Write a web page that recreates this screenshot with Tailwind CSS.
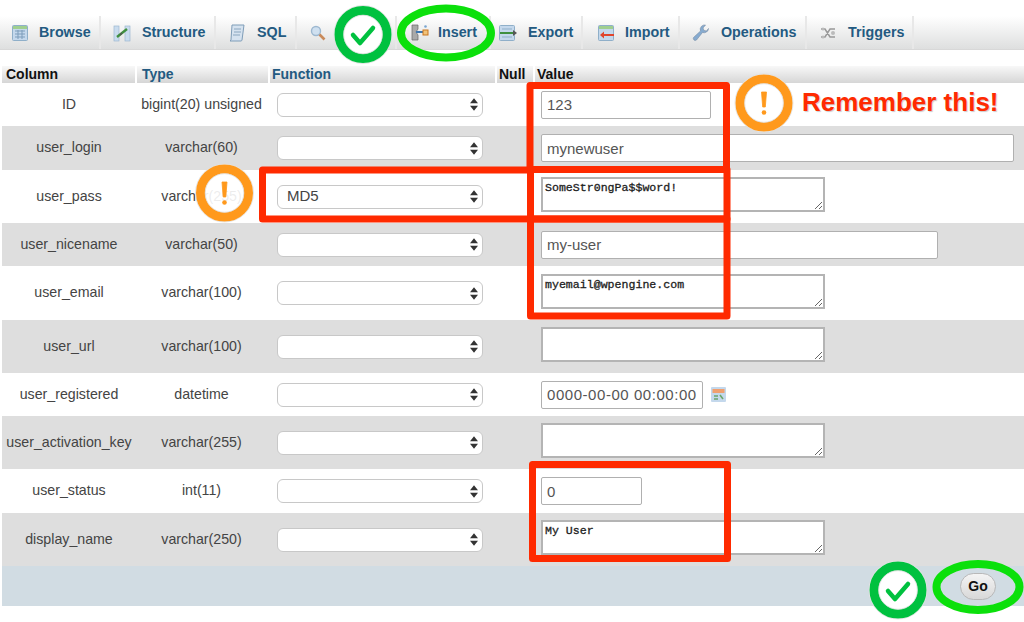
<!DOCTYPE html>
<html lang="en">
<head>
    <meta charset="UTF-8">
    <title>Insert row</title>
    <script src="https://cdn.jsdelivr.net/npm/@tailwindcss/browser@4"></script>
</head>
<body class="bg-white">
<div class="relative w-[1024px] h-[622px] overflow-hidden font-['Liberation_Sans',sans-serif] text-[#444]">

    <!-- tabs -->
    <div class="flex mt-4 h-[34px] bg-gradient-to-b from-white to-[#dedfdf] border-b border-[#d8d8d8] text-[#235a81] text-[14.3px] font-bold">
        <a class="w-[101px] flex items-center pl-3 gap-[11px] border-r-2 border-[#e8e8e8]">
            <svg class="w-4 h-4" viewBox="0 0 16 16"><rect x=".5" y=".5" width="15" height="15" rx="1" fill="#c4d8ec" stroke="#8fafc9"/><rect x="1" y="1" width="14" height="3" fill="#9fcf8f"/><path d="M3 6h10M3 9h10M3 12h10M6 5v9M10 5v9" stroke="#7d9dbb"/></svg>
            <span>Browse</span>
        </a>
        <a class="w-[115px] flex items-center pl-3 gap-[11px] border-r-2 border-[#e8e8e8]">
            <svg class="w-[18px] h-[18px]" viewBox="0 0 18 18"><rect x="1" y="2" width="5" height="15" fill="#c9dcee" stroke="#9db8d0" stroke-width=".7"/><rect x="12" y="2" width="5" height="15" fill="#c9dcee" stroke="#9db8d0" stroke-width=".7"/><path d="M4 13 L9 9 L14 5" stroke="#3f8f3f" stroke-width="2.4" fill="none"/><path d="M7 11l2-2" stroke="#555" stroke-width="1.4"/></svg>
            <span>Structure</span>
        </a>
        <a class="w-[81px] flex items-center pl-3 gap-3 border-r-2 border-[#e8e8e8]">
            <svg class="w-[17px] h-[18px]" viewBox="0 0 17 18"><path d="M4 1h12l-2 15q-.2 1-1 1H2l1-1z" fill="#d5e2ef" stroke="#7f9db8"/><path d="M6 5h7M6 8h7M5 11h7" stroke="#8aa6bf"/></svg>
            <span>SQL</span>
        </a>
        <a class="w-[100px] flex items-center pl-[13px] gap-[11px] border-r-2 border-[#e8e8e8]">
            <svg class="w-4 h-4" viewBox="0 0 16 16"><circle cx="6" cy="6" r="4.5" fill="#cfe0f0" stroke="#9db8d0" stroke-width="1.4"/><path d="M9.5 9.5l5 5" stroke="#c98a5a" stroke-width="2.6"/></svg>
            <span>Search</span>
        </a>
        <a class="w-[94px] flex items-center pl-[14px] gap-[9px] border-r-2 border-[#e8e8e8]">
            <svg class="w-[18px] h-[17px]" viewBox="0 0 18 17"><path d="M1 1h6v4l-2 3 2 3v5H1z" fill="#a9a9a9" stroke="#666" stroke-width=".7"/><path d="M5 8h7" stroke="#3d78b5" stroke-width="2"/><rect x="12" y="6" width="5" height="5" fill="#f0c27a" stroke="#c9761e"/><circle cx="14.5" cy="2.5" r="1.3" fill="#7aa5d0"/></svg>
            <span>Insert</span>
        </a>
        <a class="w-[92px] flex items-center pl-2 gap-[11px] border-r-2 border-[#e8e8e8]">
            <svg class="w-[18px] h-4" viewBox="0 0 18 16"><rect x=".5" y=".5" width="15" height="15" rx="1" fill="#c4d8ec" stroke="#8fafc9"/><path d="M3 4h10M3 12h10" stroke="#8fafc9"/><path d="M1 8h15" stroke="#3f8f3f" stroke-width="2"/><path d="M14 5l4 3-4 3z" fill="#555"/></svg>
            <span>Export</span>
        </a>
        <a class="w-[97px] flex items-center pl-[15px] gap-[11px] border-r-2 border-[#e8e8e8]">
            <svg class="w-4 h-4" viewBox="0 0 16 16"><rect x=".5" y=".5" width="15" height="15" rx="1" fill="#c4d8ec" stroke="#8fafc9"/><rect x="1" y="1" width="14" height="3" fill="#9fcf8f"/><path d="M5 10h11" stroke="#e0452c" stroke-width="2"/><path d="M6 6.5L2 10l4 3.5z" fill="#e0452c"/></svg>
            <span>Import</span>
        </a>
        <a class="w-[127px] flex items-center pl-3 gap-[11px] border-r-2 border-[#e8e8e8]">
            <svg class="w-[18px] h-[18px]" viewBox="0 0 18 18"><path d="M16.5 4.5a4.5 4.5 0 0 1-6 4L4.5 16a2 2 0 0 1-3-2.500L8.500 7a4.500 4.500 0 0 1 5-6l-2.500 3 1 2.500 2.500.5z" fill="#86abd0" stroke="#7a8fa5" stroke-width=".6"/></svg>
            <span>Operations</span>
        </a>
        <a class="w-[107px] flex items-center pl-[13px] gap-3 border-r-2 border-[#e8e8e8]">
            <svg class="w-4 h-3" viewBox="0 0 16 12"><path d="M1 2h4l5 8h5M1 10h4l5-8h5" stroke="#999" stroke-width="1.500" fill="none"/><circle cx="3" cy="2" r="1.500" fill="#bbb"/><circle cx="3" cy="10" r="1.500" fill="#bbb"/><circle cx="13" cy="6" r="2" fill="#bbb"/></svg>
            <span>Triggers</span>
        </a>
    </div>

    <div class="ml-[2px] mt-4">
        <!-- header -->
        <div class="flex h-[17px] text-[14px] font-bold leading-[17px] text-[#111] bg-gradient-to-b from-[#f8f8f8] to-[#d6d6d6]">
            <div class="w-[135px] pl-1 border-r-2 border-white">Column</div>
            <div class="w-[133px] pl-[5px] border-r-2 border-white text-[#235a81]">Type</div>
            <div class="w-[227px] pl-[2px] border-r-2 border-white text-[#235a81]">Function</div>
            <div class="w-[38px] pl-[2px] border-r-2 border-white">Null</div>
            <div class="pl-[2px]">Value</div>
        </div>

        <!-- rows -->
        <div class="flex items-center h-[43px] text-[14.2px]">
            <div class="w-[134px] text-center">ID</div>
            <div class="w-[131px] text-center">bigint(20) unsigned</div>
            <div class="w-[230px] pl-[10px]"><div class="flex items-center justify-between w-[206px] h-6 px-[9px] pr-1 bg-white border border-[#c8c8c8] rounded-md text-[15px]"><span></span><svg class="w-2 h-[13px]" viewBox="0 0 9 14"><path d="M4.500 0L9 5.500H0zM4.500 14L0 8.500h9z" fill="#333"/></svg></div></div>
            <div class="w-[37px]"></div>
            <div class="pl-[7px]"><input class="block w-[170px] h-7 px-[5px] bg-white border border-[#b0b0b0] rounded-[2px] text-[15px] text-[#555]" value="123"></div>
        </div>
        <div class="flex items-center h-[44px] text-[14.2px] bg-[#dedede]">
            <div class="w-[134px] text-center">user_login</div>
            <div class="w-[131px] text-center">varchar(60)</div>
            <div class="w-[230px] pl-[10px]"><div class="flex items-center justify-between w-[206px] h-6 px-[9px] pr-1 bg-white border border-[#c8c8c8] rounded-md text-[15px]"><span></span><svg class="w-2 h-[13px]" viewBox="0 0 9 14"><path d="M4.500 0L9 5.500H0zM4.500 14L0 8.500h9z" fill="#333"/></svg></div></div>
            <div class="w-[37px]"></div>
            <div class="pl-[7px]"><input class="block w-[473px] h-7 px-[5px] bg-white border border-[#b0b0b0] rounded-[2px] text-[15px] text-[#555]" value="mynewuser"></div>
        </div>
        <div class="flex items-center h-[53px] text-[14.2px]">
            <div class="w-[134px] text-center">user_pass</div>
            <div class="w-[131px] text-center">varchar(255)</div>
            <div class="w-[230px] pl-[10px]"><div class="flex items-center justify-between w-[206px] h-6 px-[9px] pr-1 bg-white border border-[#c8c8c8] rounded-md text-[15px]"><span>MD5</span><svg class="w-2 h-[13px]" viewBox="0 0 9 14"><path d="M4.500 0L9 5.500H0zM4.500 14L0 8.500h9z" fill="#333"/></svg></div></div>
            <div class="w-[37px]"></div>
            <div class="pl-[7px] mb-1"><textarea class="block w-[284px] h-[35px] px-[2px] py-[2px] bg-white border-2 border-[#b4b4b4] font-['Liberation_Mono',monospace] text-[11.6px] leading-[13px] text-[#222] [-webkit-text-stroke:0.3px_#222]">SomeStr0ngPa$$word!</textarea></div>
        </div>
        <div class="flex items-center h-[43px] text-[14.2px] bg-[#dedede]">
            <div class="w-[134px] text-center">user_nicename</div>
            <div class="w-[131px] text-center">varchar(50)</div>
            <div class="w-[230px] pl-[10px]"><div class="flex items-center justify-between w-[206px] h-6 px-[9px] pr-1 bg-white border border-[#c8c8c8] rounded-md text-[15px]"><span></span><svg class="w-2 h-[13px]" viewBox="0 0 9 14"><path d="M4.500 0L9 5.500H0zM4.500 14L0 8.500h9z" fill="#333"/></svg></div></div>
            <div class="w-[37px]"></div>
            <div class="pl-[7px]"><input class="block w-[397px] h-7 px-[5px] bg-white border border-[#b0b0b0] rounded-[2px] text-[15px] text-[#555]" value="my-user"></div>
        </div>
        <div class="flex items-center h-[54px] text-[14.2px]">
            <div class="w-[134px] text-center">user_email</div>
            <div class="w-[131px] text-center">varchar(100)</div>
            <div class="w-[230px] pl-[10px]"><div class="flex items-center justify-between w-[206px] h-6 px-[9px] pr-1 bg-white border border-[#c8c8c8] rounded-md text-[15px]"><span></span><svg class="w-2 h-[13px]" viewBox="0 0 9 14"><path d="M4.500 0L9 5.500H0zM4.500 14L0 8.500h9z" fill="#333"/></svg></div></div>
            <div class="w-[37px]"></div>
            <div class="pl-[7px] mb-1"><textarea class="block w-[284px] h-[35px] px-[2px] py-[2px] bg-white border-2 border-[#b4b4b4] font-['Liberation_Mono',monospace] text-[11.6px] leading-[13px] text-[#222] [-webkit-text-stroke:0.3px_#222]">myemail@wpengine.com</textarea></div>
        </div>
        <div class="flex items-center h-[53px] text-[14.2px] bg-[#dedede]">
            <div class="w-[134px] text-center">user_url</div>
            <div class="w-[131px] text-center">varchar(100)</div>
            <div class="w-[230px] pl-[10px]"><div class="flex items-center justify-between w-[206px] h-6 px-[9px] pr-1 bg-white border border-[#c8c8c8] rounded-md text-[15px]"><span></span><svg class="w-2 h-[13px]" viewBox="0 0 9 14"><path d="M4.500 0L9 5.500H0zM4.500 14L0 8.500h9z" fill="#333"/></svg></div></div>
            <div class="w-[37px]"></div>
            <div class="pl-[7px] mb-1"><textarea class="block w-[284px] h-[35px] px-[2px] py-[2px] bg-white border-2 border-[#b4b4b4]"></textarea></div>
        </div>
        <div class="flex items-center h-[43px] text-[14.2px]">
            <div class="w-[134px] text-center">user_registered</div>
            <div class="w-[131px] text-center">datetime</div>
            <div class="w-[230px] pl-[10px]"><div class="flex items-center justify-between w-[206px] h-6 px-[9px] pr-1 bg-white border border-[#c8c8c8] rounded-md text-[15px]"><span></span><svg class="w-2 h-[13px]" viewBox="0 0 9 14"><path d="M4.500 0L9 5.500H0zM4.500 14L0 8.500h9z" fill="#333"/></svg></div></div>
            <div class="w-[37px]"></div>
            <div class="pl-[7px] flex items-center gap-2">
                <input class="block w-[162px] h-7 px-[5px] bg-white border border-[#b0b0b0] rounded-[2px] text-[15px] tracking-[.55px] text-[#555]" value="0000-00-00 00:00:00">
                <svg class="w-[15px] h-[15px]" viewBox="0 0 15 15"><rect width="15" height="15" rx="1" fill="#c4d8ec"/><rect x="1.500" y="2" width="12" height="4" fill="#f0a070"/><path d="M3 9h4M3 12h4" stroke="#6aa56a" stroke-width="1.500"/><path d="M9 8l3 4" stroke="#6aa56a" stroke-width="1.500"/></svg>
            </div>
        </div>
        <div class="flex items-center h-[53px] text-[14.2px] bg-[#dedede]">
            <div class="w-[134px] text-center">user_activation_key</div>
            <div class="w-[131px] text-center">varchar(255)</div>
            <div class="w-[230px] pl-[10px]"><div class="flex items-center justify-between w-[206px] h-6 px-[9px] pr-1 bg-white border border-[#c8c8c8] rounded-md text-[15px]"><span></span><svg class="w-2 h-[13px]" viewBox="0 0 9 14"><path d="M4.500 0L9 5.500H0zM4.500 14L0 8.500h9z" fill="#333"/></svg></div></div>
            <div class="w-[37px]"></div>
            <div class="pl-[7px] mb-1"><textarea class="block w-[284px] h-[35px] px-[2px] py-[2px] bg-white border-2 border-[#b4b4b4]"></textarea></div>
        </div>
        <div class="flex items-center h-[44px] text-[14.2px]">
            <div class="w-[134px] text-center">user_status</div>
            <div class="w-[131px] text-center">int(11)</div>
            <div class="w-[230px] pl-[10px]"><div class="flex items-center justify-between w-[206px] h-6 px-[9px] pr-1 bg-white border border-[#c8c8c8] rounded-md text-[15px]"><span></span><svg class="w-2 h-[13px]" viewBox="0 0 9 14"><path d="M4.500 0L9 5.500H0zM4.500 14L0 8.500h9z" fill="#333"/></svg></div></div>
            <div class="w-[37px]"></div>
            <div class="pl-[7px]"><input class="block w-[101px] h-7 px-[5px] bg-white border border-[#b0b0b0] rounded-[2px] text-[15px] text-[#555]" value="0"></div>
        </div>
        <div class="flex items-center h-[53px] text-[14.2px] bg-[#dedede]">
            <div class="w-[134px] text-center">display_name</div>
            <div class="w-[131px] text-center">varchar(250)</div>
            <div class="w-[230px] pl-[10px]"><div class="flex items-center justify-between w-[206px] h-6 px-[9px] pr-1 bg-white border border-[#c8c8c8] rounded-md text-[15px]"><span></span><svg class="w-2 h-[13px]" viewBox="0 0 9 14"><path d="M4.500 0L9 5.500H0zM4.500 14L0 8.500h9z" fill="#333"/></svg></div></div>
            <div class="w-[37px]"></div>
            <div class="pl-[7px] mb-1"><textarea class="block w-[284px] h-[35px] px-[2px] py-[2px] bg-white border-2 border-[#b4b4b4] font-['Liberation_Mono',monospace] text-[11.6px] leading-[13px] text-[#222] [-webkit-text-stroke:0.3px_#222]">My User</textarea></div>
        </div>

        <!-- footer -->
        <div class="flex items-center justify-end h-10 pr-7 bg-[#d1dce3]">
            <button class="w-9 h-[27px] rounded-full bg-gradient-to-b from-[#f4f4f4] to-[#d8d8d8] border border-[#b8b8b8] text-[14px] font-bold text-[#111]">Go</button>
        </div>
    </div>

    <!-- annotations drawn over the screenshot -->
    <svg class="absolute inset-0 w-[1024px] h-[622px]" viewBox="0 0 1024 622" fill="none">
        <g stroke="#ff2a00" stroke-width="7" stroke-linejoin="round">
            <rect x="530" y="85.500" width="196.500" height="84"/>
            <rect x="262.500" y="170" width="268" height="49"/>
            <rect x="530.500" y="169.500" width="196.500" height="49.500"/>
            <rect x="530.500" y="219" width="196.500" height="97"/>
            <rect x="532.500" y="464.500" width="195" height="94"/>
        </g>
        <g stroke="#0be00b" stroke-width="8">
            <ellipse cx="446" cy="33" rx="45" ry="24.500"/>
            <ellipse cx="978" cy="587" rx="41.500" ry="23"/>
        </g>
        <g>
            <circle cx="363" cy="34.500" r="29" fill="#fff" stroke="#ddd" stroke-width=".8"/>
            <circle cx="363" cy="34.500" r="24" stroke="#00c13f" stroke-width="9" fill="#fff" fill-opacity=".85"/>
            <circle cx="363" cy="34.500" r="19.300" stroke="#ddd" stroke-width=".8"/>
            <path d="M353 35l7 8 13-15" stroke="#00c13f" stroke-width="4.500" stroke-linecap="round" stroke-linejoin="round"/>

            <circle cx="898" cy="590" r="29" fill="#fff" stroke="#ddd" stroke-width=".8"/>
            <circle cx="898" cy="590" r="24" stroke="#00c13f" stroke-width="9" fill="#fff"/>
            <circle cx="898" cy="590" r="19.300" stroke="#ddd" stroke-width=".8"/>
            <path d="M888 591l7 8 13-15" stroke="#00c13f" stroke-width="4.500" stroke-linecap="round" stroke-linejoin="round"/>

            <circle cx="764" cy="103" r="29" fill="#fff" stroke="#ddd" stroke-width=".8"/>
            <circle cx="764" cy="103" r="24" stroke="#ff991c" stroke-width="9" fill="#fff"/>
            <circle cx="764" cy="103" r="19.300" stroke="#ddd" stroke-width=".8"/>
            <path d="M761.500 92h5l-1.200 15h-2.600z" fill="#ff991c" stroke="#ff991c" stroke-width=".8" stroke-linejoin="round"/>
            <circle cx="764" cy="112.500" r="2.300" fill="#ff991c"/>

            <circle cx="224.500" cy="193" r="29" fill="#fff" fill-opacity=".9" stroke="#ddd" stroke-width=".8"/>
            <circle cx="224.500" cy="193" r="24" stroke="#ff991c" stroke-width="9"/>
            <circle cx="224.500" cy="193" r="19.300" stroke="#ddd" stroke-width=".8"/>
            <path d="M222 182h5l-1.200 15h-2.600z" fill="#ff991c" stroke="#ff991c" stroke-width=".8" stroke-linejoin="round"/>
            <circle cx="224.500" cy="202.500" r="2.300" fill="#ff991c"/>
        </g>
    </svg>
    <div class="absolute left-[802px] top-[87px] text-[26px] leading-[30px] font-bold text-[#ff2a00] [text-shadow:1px_1px_1px_#ccc]">Remember this!</div>
</div>
</body>
</html>
